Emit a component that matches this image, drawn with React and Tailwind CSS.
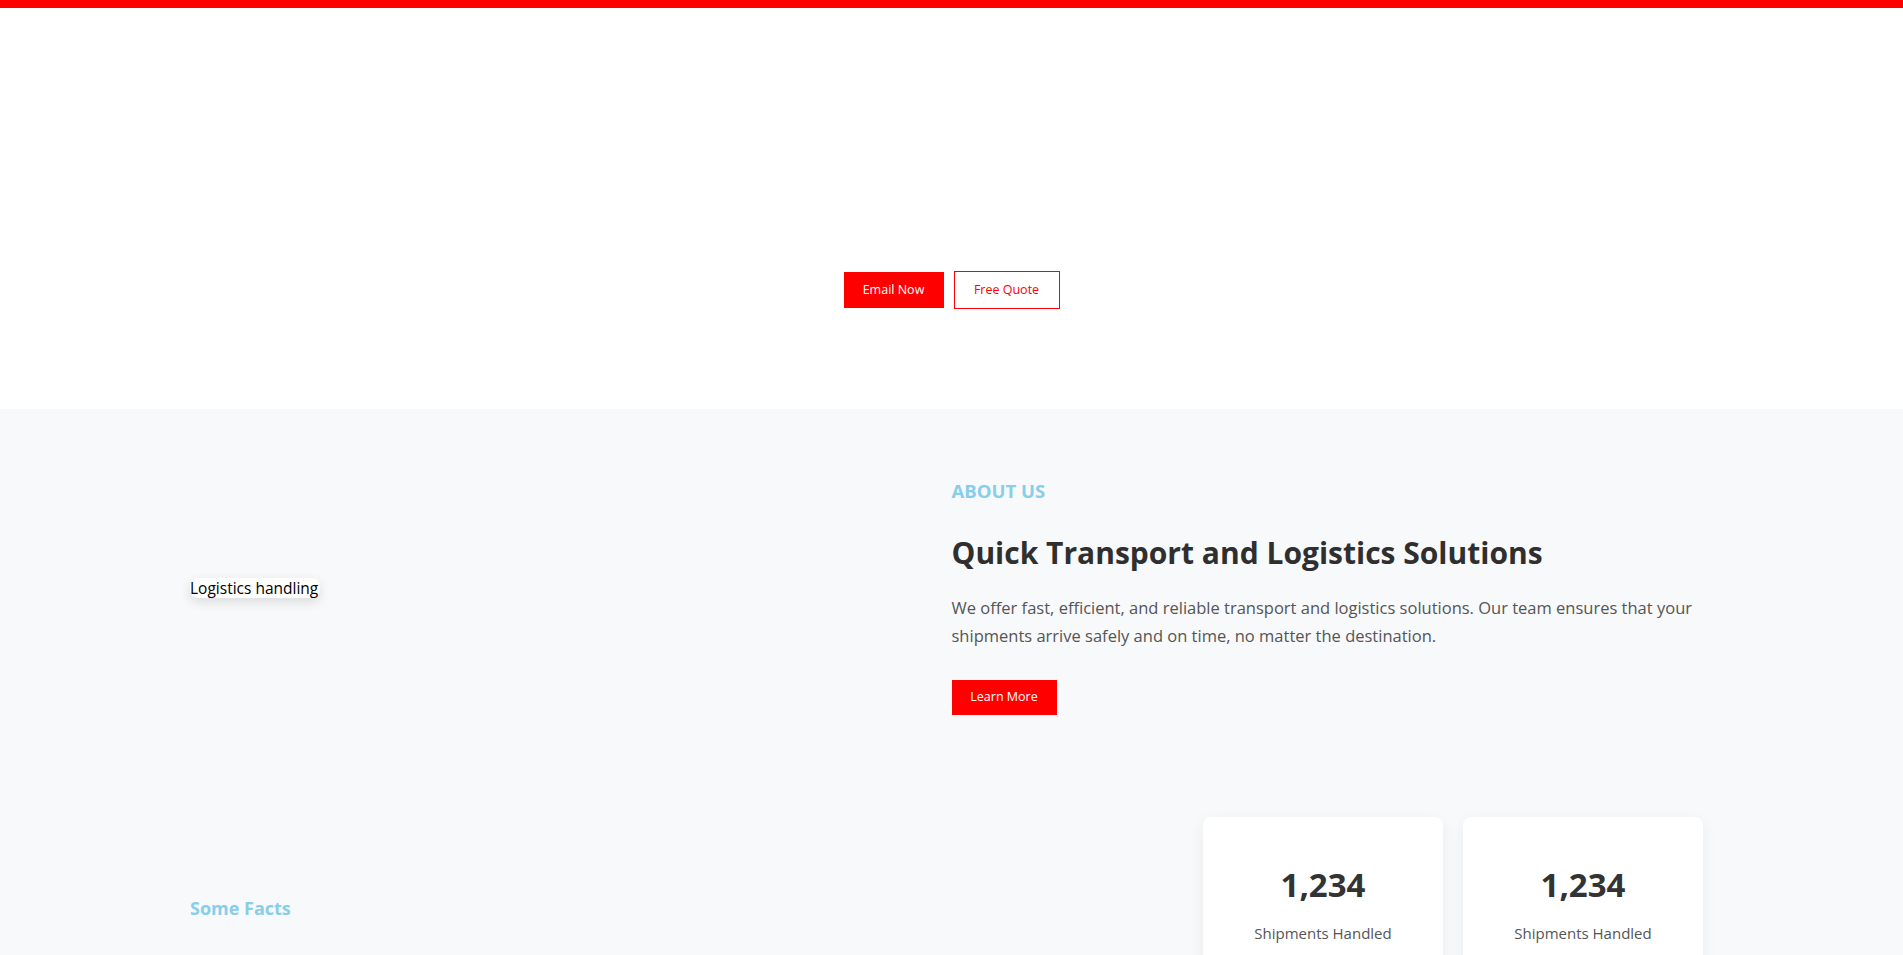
export default function App() {
  const font = "font-['Open_Sans','Noto_Sans',sans-serif]";
  return (
    <div className={`min-h-screen bg-white ${font}`}>
      <div className="h-2 bg-[#ff0000]" />
      <section className="h-[401px] flex justify-center pt-[263px]">
        <div className="flex items-center h-[38px]">
          <a className="h-[36px] w-[100px] flex items-center justify-center bg-[#ff0000] text-white text-[12.5px] mr-[10px]">
            Email Now
          </a>
          <a className="h-[38px] w-[106px] flex items-center justify-center border border-[#ff0000] text-[#ff0000] text-[12.5px]">
            Free Quote
          </a>
        </div>
      </section>
      <div className="bg-[#f8f9fa]">
        <section className="pl-[190px] pr-[190px] pt-[70px] pb-[70px] grid grid-cols-2 items-center">
          <div className="flex items-center pb-[18px]">
            <span className="bg-white rounded-lg shadow-[0_4px_12px_rgba(0,0,0,0.12)] text-black text-[15.5px] leading-[20px] pr-[2px]">
              Logistics handling
            </span>
          </div>
          <div>
            <h5 className="text-[18.5px] leading-[24px] font-bold text-[#87ceeb] uppercase">About Us</h5>
            <h2 className="mt-[31px] text-[30px] leading-[38px] font-bold text-[#2f2f2f]">
              Quick Transport and Logistics Solutions
            </h2>
            <p className="mt-[22px] text-[16.5px] leading-[28px] text-[#555] max-w-[760px]">
              We offer fast, efficient, and reliable transport and logistics solutions. Our team ensures that your shipments arrive safely and on time, no matter the destination.
            </p>
            <a className="mt-[30px] h-[35px] w-[105px] flex items-center justify-center bg-[#ff0000] text-white text-[12.5px]">
              Learn More
            </a>
          </div>
        </section>
        <section className="pl-[190px] pr-[200px] pt-[32px] pb-[40px] flex items-center justify-between">
          <h4 className="text-[18px] leading-[24px] font-bold text-[#87ceeb]">Some Facts</h4>
          <div className="flex gap-[20px]">
            {[0, 1].map((i) => (
              <div key={i} className="w-[240px] h-[182px] bg-white rounded-lg shadow-[0_4px_16px_rgba(0,0,0,0.06)] flex flex-col items-center pt-[48px]">
                <div className="text-[33px] leading-[40px] font-bold text-[#333]">1,234</div>
                <div className="mt-[17px] text-[15px] leading-[22px] text-[#555]">Shipments Handled</div>
              </div>
            ))}
          </div>
        </section>
      </div>
    </div>
  );
}
